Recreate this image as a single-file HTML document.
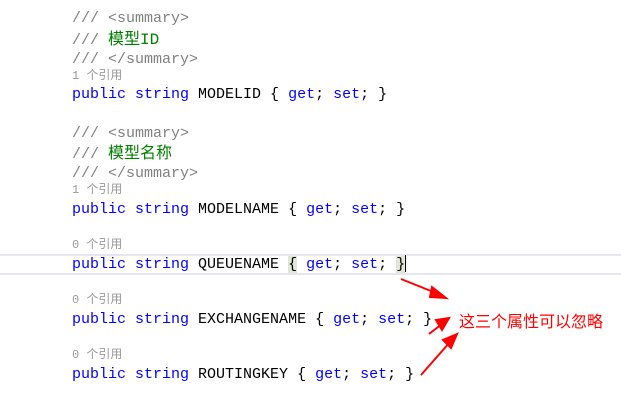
<!DOCTYPE html>
<html><head><meta charset="utf-8"><style>
body{margin:0;width:621px;height:400px;background:#fff;position:relative;overflow:hidden;font-family:"Liberation Mono","Noto Sans CJK SC",monospace;}
.l{position:absolute;left:72px;font-size:15px;line-height:20px;white-space:pre;color:#000;}
.c{color:#808080}.g{color:#008000;font-size:16px;font-family:"Liberation Mono","Noto Sans CJK SC",monospace}
.k{color:#0000ff}
.r{position:absolute;left:72px;font-size:12px;line-height:14px;color:#999;white-space:pre;font-family:"Liberation Mono","Noto Sans CJK SC",monospace}
.hb{background:#e2e6d6}
</style></head><body>
<div class="l c" style="top:9px">/// &lt;summary&gt;</div>
<div class="l c" style="top:30px">/// <span class="g">模型ID</span></div>
<div class="l c" style="top:50px">/// &lt;/summary&gt;</div>
<div class="r" style="top:69px">1 个引用</div>
<div class="l" style="top:85px"><span class="k">public</span> <span class="k">string</span> MODELID { <span class="k">get</span>; <span class="k">set</span>; }</div>

<div class="l c" style="top:124px">/// &lt;summary&gt;</div>
<div class="l c" style="top:144px">/// <span class="g">模型名称</span></div>
<div class="l c" style="top:164px">/// &lt;/summary&gt;</div>
<div class="r" style="top:183px">1 个引用</div>
<div class="l" style="top:200px"><span class="k">public</span> <span class="k">string</span> MODELNAME { <span class="k">get</span>; <span class="k">set</span>; }</div>

<div class="r" style="top:238px">0 个引用</div>
<div style="position:absolute;left:0;top:254px;width:621px;height:17px;border-top:2px solid #e6e6ee;border-bottom:2px solid #e6e6ee;"></div>
<div class="l" style="top:255px"><span class="k">public</span> <span class="k">string</span> QUEUENAME <span class="hb">{</span> <span class="k">get</span>; <span class="k">set</span>; <span class="hb">}</span></div>
<div style="position:absolute;left:405px;top:255px;width:1px;height:17px;background:#000"></div>

<div class="r" style="top:293px">0 个引用</div>
<div class="l" style="top:310px"><span class="k">public</span> <span class="k">string</span> EXCHANGENAME { <span class="k">get</span>; <span class="k">set</span>; }</div>

<div class="r" style="top:348px">0 个引用</div>
<div class="l" style="top:365px"><span class="k">public</span> <span class="k">string</span> ROUTINGKEY { <span class="k">get</span>; <span class="k">set</span>; }</div>

<svg style="position:absolute;left:0;top:0" width="621" height="400">
<g stroke="#f00" stroke-width="2" fill="#f00">
<line x1="401" y1="279" x2="436" y2="293"/><polygon points="446,298 432,287 430,297"/>
<line x1="429" y1="334" x2="442" y2="324"/><polygon points="449,318 436,320 442,330"/>
<line x1="421" y1="375" x2="450" y2="342"/><polygon points="457,334 443,340 451,348"/>
</g></svg>
<div style="position:absolute;left:459px;top:309px;font-size:16px;line-height:22px;color:#f00;font-family:'Noto Sans CJK SC',sans-serif">这三个属性可以忽略</div>
</body></html>
